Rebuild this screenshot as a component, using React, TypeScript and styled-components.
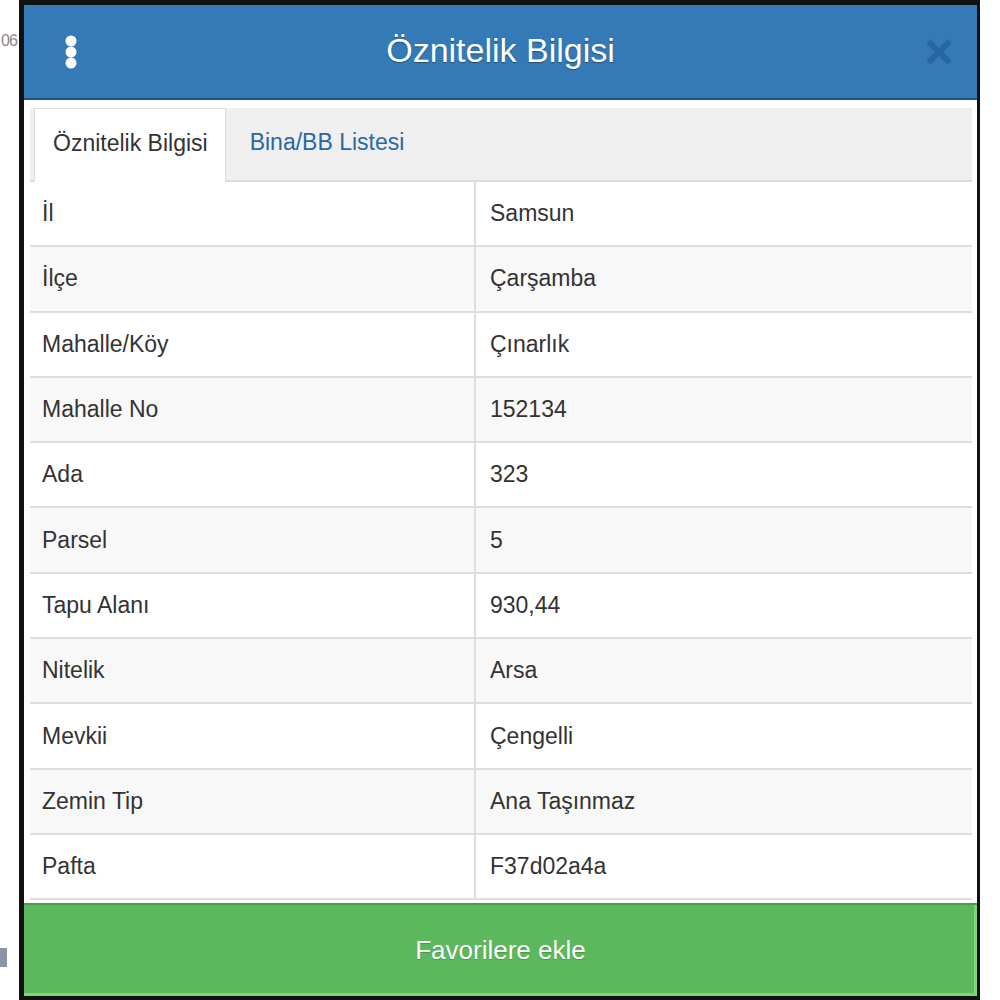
import styled, { createGlobalStyle } from "styled-components";

const GlobalStyle = createGlobalStyle`
  html, body {
    margin: 0;
    padding: 0;
    background: #ffffff;
  }
  body {
    font-family: "Liberation Sans", Arial, sans-serif;
  }
`;

const rows = [
  { label: "İl", value: "Samsun" },
  { label: "İlçe", value: "Çarşamba" },
  { label: "Mahalle/Köy", value: "Çınarlık" },
  { label: "Mahalle No", value: "152134" },
  { label: "Ada", value: "323" },
  { label: "Parsel", value: "5" },
  { label: "Tapu Alanı", value: "930,44" },
  { label: "Nitelik", value: "Arsa" },
  { label: "Mevkii", value: "Çengelli" },
  { label: "Zemin Tip", value: "Ana Taşınmaz" },
  { label: "Pafta", value: "F37d02a4a" },
];

export default function App() {
  return (
    <>
      <GlobalStyle />
      <Page>
        <Gutter>
          <StrayText>06</StrayText>
          <StrayBlock />
        </Gutter>
        <Panel>
          <Header>
            <HeaderLeft>
              <MenuIcon width="14" height="34" viewBox="0 0 14 34">
                <circle cx="7" cy="6" r="5.5" fill="#fff" />
                <circle cx="7" cy="17" r="5.5" fill="#fff" />
                <circle cx="7" cy="28" r="5.5" fill="#fff" />
              </MenuIcon>
            </HeaderLeft>
            <Title>Öznitelik Bilgisi</Title>
            <HeaderRight>
              <CloseIcon width="26" height="26" viewBox="0 0 26 26">
                <path
                  d="M4 4 L22 22 M22 4 L4 22"
                  stroke="#1f5c94"
                  strokeWidth="6"
                  strokeLinecap="round"
                  opacity="0.6"
                />
              </CloseIcon>
            </HeaderRight>
          </Header>

          <TabsWrap>
            <TabNav>
              <Tab $active>Öznitelik Bilgisi</Tab>
              <Tab>Bina/BB Listesi</Tab>
            </TabNav>
          </TabsWrap>

          <Table>
            {rows.map((r, i) => (
              <Row key={r.label} $striped={i % 2 === 1}>
                <LabelCell>{r.label}</LabelCell>
                <ValueCell>{r.value}</ValueCell>
              </Row>
            ))}
          </Table>

          <FavButton>Favorilere ekle</FavButton>
        </Panel>
      </Page>
    </>
  );
}

const Page = styled.div`
  display: flex;
  height: 1000px;
  width: 1000px;
  overflow: hidden;
`;

const Gutter = styled.div`
  width: 19px;
  flex-shrink: 0;
  display: flex;
  flex-direction: column;
  justify-content: space-between;
  padding: 32px 0 33px;
  box-sizing: border-box;
`;

const StrayText = styled.div`
  font-size: 16px;
  letter-spacing: -1px;
  color: #8a8a8a;
  white-space: nowrap;
  padding-left: 1px;
`;

const StrayBlock = styled.div`
  width: 7px;
  height: 19px;
  background: #8c95a8;
`;

const Panel = styled.div`
  width: 961px;
  flex-shrink: 0;
  box-sizing: border-box;
  border-left: 5px solid #111;
  border-top: 5px solid #111;
  border-right: 3px solid #111;
  border-bottom: 4px solid #111;
  background: #fff;
  display: flex;
  flex-direction: column;
`;

const Header = styled.div`
  height: 95px;
  box-sizing: border-box;
  background: #337ab7;
  border-bottom: 2px solid #1f5384;
  display: grid;
  grid-template-columns: 1fr auto 1fr;
  align-items: center;
`;

const HeaderLeft = styled.div`
  padding-left: 40px;
  display: flex;
  align-items: center;
`;

const HeaderRight = styled.div`
  padding-right: 25px;
  display: flex;
  justify-content: flex-end;
  align-items: center;
`;

const MenuIcon = styled.svg`
  display: block;
`;

const CloseIcon = styled.svg`
  display: block;
`;

const Title = styled.div`
  color: #fff;
  font-size: 34px;
  text-shadow: 0 1px 1px rgba(0, 0, 0, 0.35);
  padding-bottom: 2px;
`;

const TabsWrap = styled.div`
  padding: 8px 5px 0 6px;
`;

const TabNav = styled.div`
  display: flex;
  height: 74px;
  box-sizing: border-box;
  background: #efefef;
  border-bottom: 2px solid #dcdcdc;
  padding-left: 4px;
`;

const Tab = styled.div<{ $active?: boolean }>`
  display: flex;
  align-items: center;
  font-size: 23px;
  box-sizing: border-box;
  height: ${(p) => (p.$active ? "74px" : "72px")};
  padding: 0 ${(p) => (p.$active ? "17px" : "24px")} 4px 18px;
  margin-left: ${(p) => (p.$active ? "0" : "6px")};
  color: ${(p) => (p.$active ? "#333" : "#2a68a2")};
  background: ${(p) => (p.$active ? "#fff" : "transparent")};
  border: ${(p) => (p.$active ? "1px solid #ddd" : "none")};
  border-bottom: none;
`;

const Table = styled.div`
  margin: 0 5px 0 6px;
  display: flex;
  flex-direction: column;
`;

const Row = styled.div<{ $striped: boolean }>`
  display: grid;
  grid-template-columns: 446px 1fr;
  height: 65.3px;
  box-sizing: border-box;
  border-bottom: 2px solid #dedede;
  background: ${(p) => (p.$striped ? "#f8f8f8" : "#fff")};
  font-size: 23px;
  color: #333;
`;

const LabelCell = styled.div`
  display: flex;
  align-items: center;
  padding-left: 12px;
  border-right: 2px solid #dedede;
`;

const ValueCell = styled.div`
  display: flex;
  align-items: center;
  padding-left: 14px;
`;

const FavButton = styled.div`
  margin-top: 3px;
  flex: 1;
  display: flex;
  align-items: center;
  justify-content: center;
  background: #5cb85c;
  border-top: 2px solid #4a9d4a;
  box-shadow: inset 0 -3px 0 #7fd37f, inset -3px 0 0 #7fd37f;
  color: #fff;
  font-size: 26px;
  text-shadow: 0 1px 1px rgba(0, 0, 0, 0.2);
`;
